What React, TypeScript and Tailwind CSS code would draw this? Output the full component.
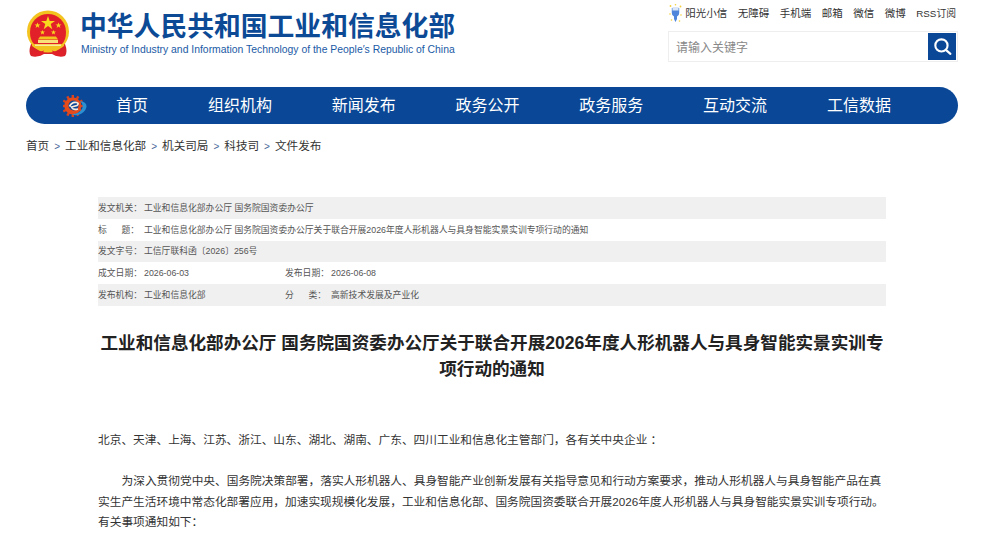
import React from "react";

const CJK = "font-['Liberation_Sans','Noto_Sans_CJK_SC',sans-serif]";

function Emblem() {
  return (
    <svg width="44" height="48" viewBox="0 0 44 48" className="shrink-0">
      <path d="M5 34 Q2 42 5 46 Q11 48 18 44 L26 44 Q33 48 39 46 Q42 42 39 34 Z" fill="#d9222a" />
      <circle cx="22" cy="21.5" r="21" fill="#f3c31f" />
      <path d="M4 22 A18 18 0 0 1 40 22 Q40 30 36 34 H8 Q4 30 4 22 Z" fill="#e2202a" />
      <polygon points="22,6 23.7,11 29,11 24.7,14.1 26.3,19.2 22,16 17.7,19.2 19.3,14.1 15,11 20.3,11" fill="#f8d81e" />
      <polygon points="11.5,12.5 12.3,14.5 14.5,14.5 12.7,15.8 13.4,18 11.5,16.6 9.6,18 10.3,15.8 8.5,14.5 10.7,14.5" fill="#f8d81e" />
      <polygon points="32.5,12.5 33.3,14.5 35.5,14.5 33.7,15.8 34.4,18 32.5,16.6 30.6,18 31.3,15.8 29.5,14.5 31.7,14.5" fill="#f8d81e" />
      <polygon points="16.5,20 17.2,21.6 19,21.6 17.5,22.7 18.1,24.4 16.5,23.4 14.9,24.4 15.5,22.7 14,21.6 15.8,21.6" fill="#f8d81e" />
      <polygon points="27.5,20 28.2,21.6 30,21.6 28.5,22.7 29.1,24.4 27.5,23.4 25.9,24.4 26.5,22.7 25,21.6 26.8,21.6" fill="#f8d81e" />
      <path d="M14 26.5 H30 L32 29.5 H12 Z" fill="#f3c31f" />
      <rect x="12" y="30" width="20" height="3" fill="#f9e07a" />
      <path d="M6 34 H38 V36 Q32 41 26 40 H18 Q12 41 6 36 Z" fill="#f3c31f" />
      <path d="M9 34.5 H35 V36 H9 Z" fill="#fbe9a0" />
      <path d="M7 41 Q13 43 18 40.5 L16 45 Q11 47 7 45 Z M37 41 Q31 43 26 40.5 L28 45 Q33 47 37 45 Z" fill="#e2202a" />
    </svg>
  );
}

function NavLogo() {
  const teeth = [30, 60, 90, 120, 150, 180, 210, 240, 270, 300, 330, 0];
  return (
    <svg width="24" height="24" viewBox="0 0 24 24" className="shrink-0">
      {teeth.map((a) => (
        <rect key={a} x="8.6" y="1" width="2.4" height="3.4" fill="#d9431f" transform={`rotate(${a} 9.8 12)`} />
      ))}
      <circle cx="9.8" cy="12" r="8.5" fill="#e54c1c" />
      <circle cx="10.5" cy="11.5" r="5" fill="#0a4897" />
      <path d="M6.5 12.5 Q9 7.5 13.5 8.5 Q16.5 9.5 14 11.5 L8.5 13 Q10 16.5 15 15" fill="none" stroke="#f6ece0" strokeWidth="1.7" />
      <path d="M9 20 Q16 20 19 15 Q21 11 17 7 Q24 8 23.5 13 Q22 19 15 21 Q11 22 9 20 Z" fill="#2b8fd0" />
    </svg>
  );
}

function SunIcon() {
  return (
    <svg width="13" height="20" viewBox="0 0 13 20" className="shrink-0">
      <path d="M2.8 4 H10.2 V9 Q10.2 12 8 12.5 V15 L6.5 18 L5 15 V12.5 Q2.8 12 2.8 9 Z" fill="#4f86dc" />
      <rect x="3.5" y="3" width="6" height="3.5" fill="#dbe6f6" />
      <g fill="#f4cf3a">
        <circle cx="1.5" cy="2" r="0.9" /><circle cx="11.5" cy="2.5" r="0.9" />
        <circle cx="1" cy="10" r="0.8" /><circle cx="12" cy="11" r="0.8" />
        <circle cx="2.5" cy="16" r="0.8" /><circle cx="10.5" cy="17" r="0.8" /><circle cx="6.5" cy="0.8" r="0.8" />
      </g>
    </svg>
  );
}

const topLinks = ["无障碍", "手机端", "邮箱", "微信", "微博"];
const navItems = ["首页", "组织机构", "新闻发布", "政务公开", "政务服务", "互动交流", "工信数据"];
const crumbs = ["工业和信息化部", "机关司局", "科技司", "文件发布"];

function MetaRow({ gray, children }: { gray?: boolean; children: React.ReactNode }) {
  return (
    <div className={`flex h-[21.8px] items-center pt-[1px] text-[8.8px] text-[#555] ${gray ? "bg-[#f0f0f0]" : ""}`}>{children}</div>
  );
}

function Label({ children }: { children: React.ReactNode }) {
  return <span className="w-[46px] shrink-0 whitespace-pre">{children}</span>;
}

export default function App() {
  return (
    <div className={`${CJK} h-[533px] w-[1000px] overflow-hidden bg-white`}>
      <header className="flex h-[87px] justify-between pl-[26px] pr-[42px]">
        <div className="flex items-start pt-[10px]">
          <Emblem />
          <div className="ml-[10px] flex flex-col">
            <div className="mt-[2px] whitespace-nowrap text-[26.8px] font-bold leading-[31px] text-[#0c4a96]">中华人民共和国工业和信息化部</div>
            <div className="ml-[1px] whitespace-nowrap font-['Liberation_Sans'] text-[10.4px] leading-[13px] text-[#1a5aa5]">
              Ministry of Industry and Information Technology of the People′s Republic of China
            </div>
          </div>
        </div>
        <div className="flex w-[290px] flex-col items-end pt-[4px]">
          <div className="flex h-[20px] shrink-0 items-center gap-[10.5px] whitespace-nowrap pr-[2px] text-[10.5px] text-[#333]">
            <span className="flex items-center gap-[3px]"><SunIcon />阳光小信</span>
            {topLinks.map((t) => (
              <span key={t}>{t}</span>
            ))}
            <span className="text-[9.8px]">RSS订阅</span>
          </div>
          <div className="mt-[7px] flex h-[31px] w-[290px] items-center justify-between border border-[#eeeeee] pl-[7px] pr-[1px]">
            <span className="mt-[2px] text-[12px] text-[#888]">请输入关键字</span>
            <div className="flex h-[27px] w-[28px] items-center justify-center bg-[#0a4897]">
              <svg width="19" height="19" viewBox="0 0 18 18" fill="none" stroke="#fff" strokeWidth="2">
                <circle cx="8" cy="8" r="5.8" />
                <path d="M12.2 12.2 L16.5 16" strokeLinecap="round" />
              </svg>
            </div>
          </div>
        </div>
      </header>

      <nav className="mx-[26px] flex h-[37px] w-[932px] items-center rounded-[18.5px] bg-[#0a4897] pl-[37px] text-[16px] text-white">
        <NavLogo />
        <div className="ml-[7px] flex">
          {navItems.map((n) => (
            <span key={n} className="w-[123.8px] whitespace-nowrap text-center first:mr-[8px] first:w-[76px]">{n}</span>
          ))}
        </div>
      </nav>

      <div className="ml-[26px] mt-[13px] flex h-[18px] items-center text-[11.6px] text-[#333]">
        <span>首页</span>
        {crumbs.map((c) => (
          <React.Fragment key={c}>
            <span className="mx-[5px] text-[10px] text-[#4a6a9a]">&gt;</span>
            <span>{c}</span>
          </React.Fragment>
        ))}
      </div>

      <main className="mx-[98px] mt-[42px] w-[788px]">
        <MetaRow gray><Label>发文机关：</Label><span>工业和信息化部办公厅 国务院国资委办公厅</span></MetaRow>
        <MetaRow><Label>{"标      题："}</Label><span>工业和信息化部办公厅 国务院国资委办公厅关于联合开展2026年度人形机器人与具身智能实景实训专项行动的通知</span></MetaRow>
        <MetaRow gray><Label>发文字号：</Label><span>工信厅联科函〔2026〕256号</span></MetaRow>
        <MetaRow>
          <Label>成文日期：</Label><span className="w-[141px]">2026-06-03</span>
          <Label>发布日期：</Label><span>2026-06-08</span>
        </MetaRow>
        <MetaRow gray>
          <Label>发布机构：</Label><span className="w-[141px]">工业和信息化部</span>
          <Label>{"分      类："}</Label><span>高新技术发展及产业化</span>
        </MetaRow>

        <h1 className="mt-[24px] text-center text-[17.6px] font-bold leading-[26px] text-[#222]">
          工业和信息化部办公厅 国务院国资委办公厅关于联合开展2026年度人形机器人与具身智能实景实训专项行动的通知
        </h1>

        <div className="mt-[48px] text-[11.7px] leading-[20.4px] text-[#333]">
          <p>北京、天津、上海、江苏、浙江、山东、湖北、湖南、广东、四川工业和信息化主管部门，各有关中央企业 ：</p>
          <p className="mt-[21px] indent-[23.5px]">
            为深入贯彻党中央、国务院决策部署，落实人形机器人、具身智能产业创新发展有关指导意见和行动方案要求，推动人形机器人与具身智能产品在真实生产生活环境中常态化部署应用，加速实现规模化发展，工业和信息化部、国务院国资委联合开展2026年度人形机器人与具身智能实景实训专项行动。有关事项通知如下：
          </p>
        </div>
      </main>
    </div>
  );
}
